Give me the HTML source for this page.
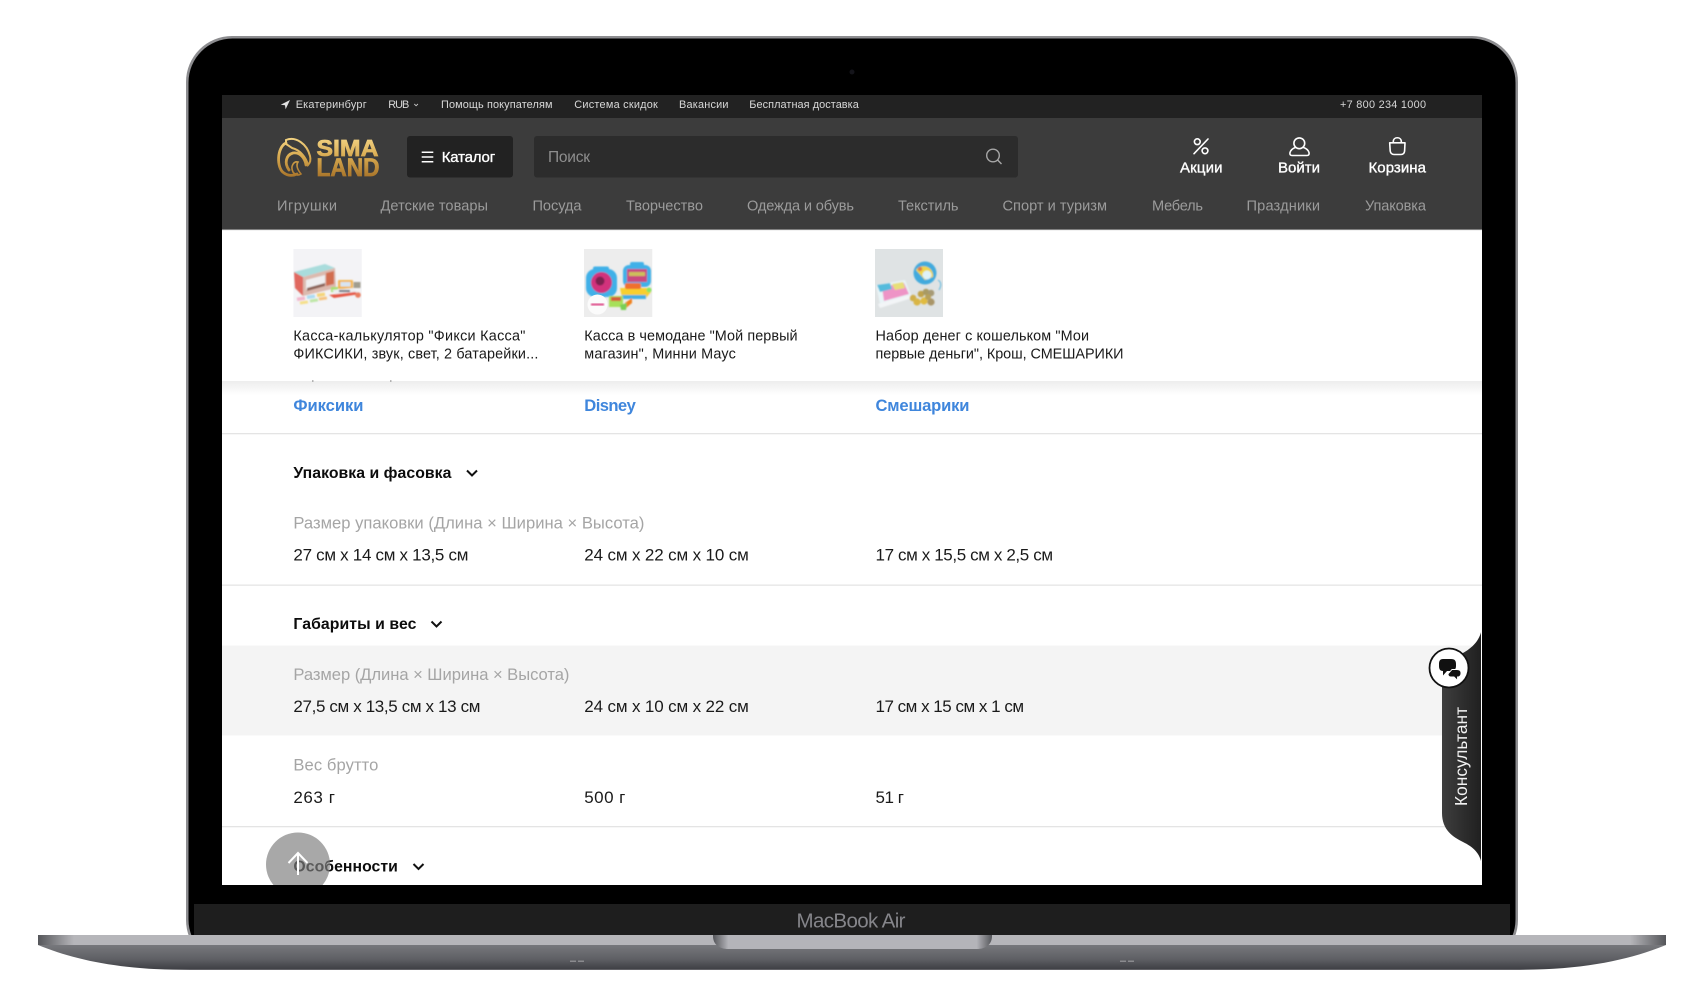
<!DOCTYPE html>
<html lang="ru"><head><meta charset="utf-8"><title>Sima-Land</title>
<style>html,body{margin:0;padding:0;background:#fff;width:1704px;height:982px;overflow:hidden}
svg{display:block}
text{font-family:"Liberation Sans",sans-serif}
.tb{font-size:10.9px;fill:#d8d8d8}
.nav{font-size:14.6px;fill:#9b9b9b}
.ic{font-size:15px;fill:#fff;stroke:#fff;stroke-width:.35}
.pt{font-size:14.4px;fill:#1a1a1a}
.br{font-size:16.6px;font-weight:bold;fill:#3f86dc}
.h{font-size:15.8px;font-weight:bold;fill:#0c0c0c}
.l{font-size:16.6px;fill:#a5a5a5}
.v{font-size:17px;fill:#1a1a1a}
</style></head><body>
<svg width="1704" height="982" viewBox="0 0 1704 982" xmlns="http://www.w3.org/2000/svg">
<defs>
<linearGradient id="gold" gradientUnits="userSpaceOnUse" x1="0" y1="137" x2="0" y2="177"><stop offset="0" stop-color="#f4d585"/><stop offset=".5" stop-color="#d7a94f"/><stop offset="1" stop-color="#a8742a"/></linearGradient>
<linearGradient id="baseG" x1="0" y1="0" x2="0" y2="1"><stop offset="0" stop-color="#77787c"/><stop offset=".55" stop-color="#5f6065"/><stop offset=".95" stop-color="#404146"/><stop offset="1" stop-color="#77777b"/></linearGradient>
<linearGradient id="stripG" x1="0" y1="0" x2="1" y2="0"><stop offset="0" stop-color="#55565a"/><stop offset=".022" stop-color="#b6b6ba"/><stop offset=".978" stop-color="#b6b6ba"/><stop offset="1" stop-color="#55565a"/></linearGradient>
<linearGradient id="notchG" x1="0" y1="0" x2="1" y2="0"><stop offset="0" stop-color="#55565a"/><stop offset=".055" stop-color="#b4b4b9"/><stop offset=".945" stop-color="#b4b4b9"/><stop offset="1" stop-color="#55565a"/></linearGradient>
<linearGradient id="cons" x1="0" y1="0" x2="1" y2="0"><stop offset="0" stop-color="#3e3e3e"/><stop offset="1" stop-color="#1f1f1f"/></linearGradient>
<linearGradient id="shade" x1="0" y1="0" x2="0" y2="1"><stop offset="0" stop-color="#000" stop-opacity=".12"/><stop offset="1" stop-color="#000" stop-opacity="0"/></linearGradient>
<clipPath id="screen"><rect x="222" y="95" width="1260" height="790"/></clipPath>
<filter id="soft" x="-5%" y="-5%" width="110%" height="110%"><feGaussianBlur stdDeviation=".7"/></filter>
<clipPath id="t1"><rect x="293.4" y="249" width="68.3" height="68"/></clipPath>
<clipPath id="t2"><rect x="584" y="249" width="68.3" height="68"/></clipPath>
<clipPath id="t3"><rect x="875" y="249" width="68" height="68"/></clipPath>
</defs>

<!-- laptop lid -->
<rect x="186" y="36" width="1332" height="930" rx="46" fill="#8d8d90"/>
<rect x="188.5" y="38.5" width="1327" height="925" rx="44" fill="#000"/>
<rect x="194" y="904" width="1316" height="31" fill="#1e1e1e"/>
<circle cx="852" cy="72" r="2.5" fill="#14141a"/>
<text x="851" y="927.5" text-anchor="middle" font-size="20.5" fill="#85858a" textLength="109">MacBook Air</text>

<!-- laptop base -->
<rect x="0" y="935" width="186" height="47" fill="#fff"/><rect x="1518" y="935" width="186" height="47" fill="#fff"/>
<path d="M38 945 C75 960 120 970 190 970 H1514 C1584 970 1629 960 1666 945 Z" fill="url(#baseG)"/>
<rect x="38" y="935" width="1628" height="10" fill="url(#stripG)"/>
<path d="M713 935 H992 V936 C992 945 985 949 977 949 H728 C720 949 713 945 713 936 Z" fill="url(#notchG)"/>
<rect x="570" y="960.5" width="6" height="1.5" fill="#8a8a8e"/><rect x="578" y="960.5" width="6" height="1.5" fill="#8a8a8e"/>
<rect x="1120" y="960.5" width="6" height="1.5" fill="#8a8a8e"/><rect x="1128" y="960.5" width="6" height="1.5" fill="#8a8a8e"/>

<!-- screen -->
<g clip-path="url(#screen)">
<rect x="222" y="95" width="1260" height="790" fill="#fff"/>
<rect x="222" y="95" width="1260" height="23" fill="#222"/>
<rect x="222" y="118" width="1260" height="112" fill="#3c3c3c"/>

<!-- top bar -->
<path d="M290 100 L280.7 104.8 L285 105.2 L285.6 109.3 Z" fill="#e2e2e2"/>
<text class="tb" x="295.7" y="108" textLength="71">Екатеринбург</text>
<text class="tb" x="388.3" y="108" textLength="21">RUB</text>
<path d="M414.3 104 l1.8 1.8 l1.8 -1.8" fill="none" stroke="#c8c8c8" stroke-width=".9"/>
<text class="tb" x="441" y="108" textLength="111.5">Помощь покупателям</text>
<text class="tb" x="574.3" y="108" textLength="83.5">Система скидок</text>
<text class="tb" x="679" y="108" textLength="49.5">Вакансии</text>
<text class="tb" x="749.3" y="108" textLength="109.5">Бесплатная доставка</text>
<text class="tb" x="1340" y="108" textLength="86">+7 800 234 1000</text>

<!-- logo -->
<g fill="none" stroke="url(#gold)" stroke-width="2.8" stroke-linecap="round">
<path d="M286 140 C296 136 307 144 310 156 C311 160 310 163 308 165 C306 157 300 150 292 148 L286 144 Z" stroke-width="2"/>
<path d="M286 143 C277 147 276 168 284 173 C288 176 293 176 297 174"/>
<path d="M289 170 C284 163 286 155 293 153 C300 152 305 158 306 165 "/>
<path d="M293 172 C290 166 294 161 298 162 C296 165 297 169 301 174 C298 176 295 175 293 172Z" stroke-width="1.6"/>
</g>
<text x="316.5" y="156" font-size="23.5" font-weight="bold" fill="url(#gold)" stroke="url(#gold)" stroke-width=".7" textLength="62" lengthAdjust="spacingAndGlyphs">SIMA</text>
<text x="316.5" y="176" font-size="25" font-weight="bold" fill="url(#gold)" stroke="url(#gold)" stroke-width=".7" textLength="63" lengthAdjust="spacingAndGlyphs">LAND</text>

<!-- catalog + search -->
<rect x="407" y="136" width="106" height="41.5" rx="3" fill="#222"/>
<path d="M421.7 152.3 H433.3 M421.7 157 H433.3 M421.7 161.7 H433.3" stroke="#fff" stroke-width="1.5"/>
<text class="ic" x="441.7" y="162" textLength="53.5">Каталог</text>
<rect x="534" y="136" width="484" height="41.5" rx="3" fill="#2c2c2c"/>
<text x="548" y="162" font-size="15.5" fill="#8e8e8e" textLength="42">Поиск</text>
<circle cx="993" cy="155.5" r="6.3" fill="none" stroke="#a6a6a6" stroke-width="1.4"/>
<path d="M997.6 160 L1001.5 164" stroke="#a6a6a6" stroke-width="1.4"/>

<!-- header icons -->
<g fill="none" stroke="#fff" stroke-width="1.6" stroke-linecap="round" stroke-linejoin="round">
<path d="M1208 139 L1194 153.7"/><circle cx="1197.3" cy="141.7" r="2.9"/><circle cx="1205" cy="150.8" r="2.9"/>
<circle cx="1299.3" cy="143.3" r="5.4"/>
<path d="M1295.3 147.5 C1292.5 148.5 1290.8 150 1290 152.5 C1289.5 154.5 1290.5 155.5 1292 155.5 H1307 C1308.5 155.5 1309.5 154.5 1309 152.5 C1308.2 150 1306.5 148.5 1303.5 147.5"/>
<path d="M1389.7 142.8 H1405 L1404.6 151 C1404.4 153 1403 154.5 1401 154.5 H1394 C1392 154.5 1390.5 153 1390.2 151 Z"/>
<path d="M1393.3 142.5 V141.5 C1393.3 136.5 1401.3 136.5 1401.3 141.5 V142.5"/>
</g>
<text class="ic" x="1180" y="172.3" textLength="42.5">Акции</text>
<text class="ic" x="1278" y="172.3" textLength="42">Войти</text>
<text class="ic" x="1368.5" y="172.3" textLength="57.5">Корзина</text>

<!-- nav -->
<text class="nav" x="277" y="210.5" textLength="60">Игрушки</text>
<text class="nav" x="380.5" y="210.5" textLength="107.5">Детские товары</text>
<text class="nav" x="532.5" y="210.5" textLength="49">Посуда</text>
<text class="nav" x="626" y="210.5" textLength="77">Творчество</text>
<text class="nav" x="747" y="210.5" textLength="107">Одежда и обувь</text>
<text class="nav" x="898" y="210.5" textLength="60.5">Текстиль</text>
<text class="nav" x="1002.5" y="210.5" textLength="104.5">Спорт и туризм</text>
<text class="nav" x="1152" y="210.5" textLength="51">Мебель</text>
<text class="nav" x="1246.5" y="210.5" textLength="73.5">Праздники</text>
<text class="nav" x="1365" y="210.5" textLength="61">Упаковка</text>

<!-- table body -->
<rect x="222" y="381" width="1260" height="14" fill="url(#shade)" opacity=".6"/>
<text class="br" x="293.4" y="411" textLength="70">Фиксики</text>
<text class="br" x="584.3" y="411" textLength="51.5">Disney</text>
<text class="br" x="875.5" y="411" textLength="94">Смешарики</text>
<rect x="222" y="433" width="1260" height="1.3" fill="#e4e4e4"/>

<text class="h" x="293.4" y="478" textLength="158">Упаковка и фасовка</text>
<path d="M467 470.5 l5 5 l5 -5" fill="none" stroke="#111" stroke-width="2"/>
<text class="l" x="293.4" y="528.7" textLength="351">Размер упаковки (Длина × Ширина × Высота)</text>
<text class="v" x="293.4" y="560.7" textLength="175">27 см x 14 см x 13,5 см</text>
<text class="v" x="584.3" y="560.7" textLength="164.5">24 см x 22 см x 10 см</text>
<text class="v" x="875.5" y="560.7" textLength="177.5">17 см x 15,5 см x 2,5 см</text>
<rect x="222" y="584.5" width="1260" height="1.3" fill="#e4e4e4"/>

<text class="h" x="293.4" y="629" textLength="123">Габариты и вес</text>
<path d="M431.5 621.5 l5 5 l5 -5" fill="none" stroke="#111" stroke-width="2"/>
<rect x="222" y="645.5" width="1260" height="90" fill="#f4f4f4"/>
<text class="l" x="293.4" y="679.8" textLength="276">Размер (Длина × Ширина × Высота)</text>
<text class="v" x="293.4" y="711.8" textLength="187">27,5 см x 13,5 см x 13 см</text>
<text class="v" x="584.3" y="711.8" textLength="164.5">24 см x 10 см x 22 см</text>
<text class="v" x="875.5" y="711.8" textLength="148.5">17 см x 15 см x 1 см</text>
<text class="l" x="293.4" y="770.6" textLength="85">Вес брутто</text>
<text class="v" x="293.4" y="802.8" textLength="41.5">263 г</text>
<text class="v" x="584.3" y="802.8" textLength="41">500 г</text>
<text class="v" x="875.5" y="802.8" textLength="28.5">51 г</text>
<rect x="222" y="826" width="1260" height="1.3" fill="#e4e4e4"/>
<text class="h" x="293.4" y="871.5" textLength="104.5">Особенности</text>
<path d="M413.5 864 l5 5 l5 -5" fill="none" stroke="#111" stroke-width="2"/>

<!-- sticky products -->
<rect x="222" y="230" width="1260" height="151" fill="#fff"/>
<rect x="222" y="229.6" width="1260" height="1" fill="#e8e8e8"/>
<rect x="312" y="380.4" width="1.5" height="1.2" fill="#888"/><rect x="390" y="380.4" width="1.5" height="1.2" fill="#888"/>

<!-- thumb 1 -->
<rect x="293.4" y="249" width="68.3" height="68" fill="#f3f3f6"/>
<g clip-path="url(#t1)"><g filter="url(#soft)">
<path d="M294 272 L325 264 L335 268 L303 277 Z" fill="#a9dcdc"/>
<path d="M294 272 L303 277 L303 296 L295 288 Z" fill="#e0685f"/>
<path d="M303 277 L335 268 L336 288 L303 296 Z" fill="#dcb9ae"/>
<path d="M306 280 L325 275 L325 285 L306 290 Z" fill="#efeef0"/>
<path d="M326 273 L334 271 L334 284 L326 286 Z" fill="#d26d4f"/>
<path d="M307 288 L325 283 L325 286 L307 291 Z" fill="#8b6257"/>
<rect x="338" y="280" width="15" height="9" rx="1" fill="#f2b653"/><rect x="340.5" y="282" width="10" height="4.5" fill="#d8e5f2"/>
<rect x="353.5" y="282" width="7" height="6" fill="#a09d8e"/>
<rect x="331" y="287" width="7" height="5" fill="#a9e070"/>
<path d="M332 290 L352 288 L360 293 L338 296 Z" fill="#eceef1"/>
<rect x="339" y="290" width="11" height="2" fill="#6b6b78"/>
<path d="M329 295 L355 292 L360 294 L334 298 Z" fill="#e55744"/>
<circle cx="358" cy="295" r="2.8" fill="#e97d5e"/>
<rect x="297" y="297" width="8" height="3.5" fill="#f3b7cd" transform="rotate(-8 301 299)"/>
<rect x="307" y="295" width="8" height="3.5" fill="#abdcf2" transform="rotate(-8 311 297)"/>
<rect x="317" y="293" width="8" height="3.5" fill="#f5d478" transform="rotate(-8 321 295)"/>
<rect x="300" y="301" width="8" height="3" fill="#f5df88" transform="rotate(-8 304 303)"/>
<rect x="310" y="299" width="8" height="3" fill="#bde6a6" transform="rotate(-8 314 301)"/>
<rect x="319" y="297" width="8" height="3" fill="#f6c27e" transform="rotate(-8 323 299)"/>
</g></g>

<!-- thumb 2 -->
<rect x="584" y="249" width="68.3" height="68" fill="#ededed"/>
<g clip-path="url(#t2)"><g filter="url(#soft)">
<rect x="586" y="269" width="31" height="28" rx="9" fill="#3fb0e8"/>
<rect x="593" y="266.5" width="16" height="4" rx="2" fill="#3fb0e8"/>
<circle cx="601.5" cy="282.5" r="10.5" fill="#d2327c"/><circle cx="600" cy="281" r="4.5" fill="#7c2050"/>
<rect x="623" y="265" width="28" height="22" rx="6" fill="#3fb0e8"/>
<rect x="630" y="262" width="14" height="4" rx="2" fill="#3fb0e8"/>
<rect x="627" y="269" width="20" height="13" fill="#c9487f"/><rect x="629" y="272" width="16" height="4" fill="#cdbf5a"/>
<path d="M620 288 H647 L651 292 L646 298 H622 Z" fill="#f8cf2e"/>
<rect x="625" y="283" width="16" height="6" rx="2" fill="#ef6f2d"/>
<rect x="622" y="295" width="24" height="4" fill="#40aee4"/>
<circle cx="649" cy="290" r="2.5" fill="#8ae65e"/>
<rect x="609" y="296" width="14" height="11" fill="#a7e05a"/>
<rect x="611" y="297" width="10" height="4" fill="#d45b3c"/>
<path d="M625 303 L632 298 L632 303 L626 308 Z" fill="#f1811f"/>
<path d="M620 305 L627 303 L626 310 L621 310 Z" fill="#78cf55"/>
</g>
<circle cx="597.5" cy="304.5" r="10" fill="#fbfbfb"/>
<rect x="591" y="303.5" width="13" height="2" fill="#dd4a87" filter="url(#soft)"/>
</g>

<!-- thumb 3 -->
<rect x="875" y="249" width="68" height="68" fill="#dfe3e4"/>
<g clip-path="url(#t3)"><g filter="url(#soft)">
<circle cx="925" cy="273" r="11.5" fill="#42aadd"/><path d="M916 270 A9.5 9.5 0 0 1 933 277 L925 280 Z" fill="#f0d648"/>
<circle cx="927" cy="275" r="4.5" fill="#dff2f8"/><circle cx="920" cy="269" r="2.2" fill="#dd7c4d"/>
<path d="M938 280 q5 3 1 10" fill="none" stroke="#5cb8e0" stroke-width="1"/>
<path d="M876 285 L905 280 L911 295 L880 304 Z" fill="#e9f4f7"/>
<path d="M882 287 L904 283 L909 294 L884 301 Z" fill="#ee94c6"/>
<path d="M877 285 L890 283 L892 289 L880 292 Z" fill="#55bbdc"/>
<path d="M892 284 L903 282 L905 288 L895 290 Z" fill="#e7df78"/>
<path d="M878 304 L911 295 L912 298 L880 308 Z" fill="#f3f5f7"/>
<circle cx="921" cy="294" r="3.3" fill="#bfa24c"/><circle cx="926" cy="292" r="3.3" fill="#a89a63"/><circle cx="931" cy="293" r="3.3" fill="#a69a75"/>
<circle cx="913" cy="298" r="3.3" fill="#cfae4a"/><circle cx="917" cy="302" r="3.6" fill="#d9b545"/><circle cx="924" cy="301" r="3.6" fill="#e0bb3f"/><circle cx="931" cy="302" r="3.6" fill="#a99568"/><circle cx="928" cy="297" r="3" fill="#b6a05a"/>
</g></g>

<!-- product titles -->
<text class="pt" x="293.4" y="340.7" textLength="232">Касса-калькулятор "Фикси Касса"</text>
<text class="pt" x="293.4" y="358.7" textLength="245">ФИКСИКИ, звук, свет, 2 батарейки...</text>
<text class="pt" x="584.3" y="340.7" textLength="213.3">Касса в чемодане "Мой первый</text>
<text class="pt" x="584.3" y="358.7" textLength="151.5">магазин", Минни Маус</text>
<text class="pt" x="875.5" y="340.7" textLength="213.5">Набор денег с кошельком "Мои</text>
<text class="pt" x="875.5" y="358.7" textLength="248">первые деньги", Крош, СМЕШАРИКИ</text>

<!-- scroll up -->
<circle cx="298" cy="864.5" r="32" fill="#7f7f7f" fill-opacity=".68"/>
<path d="M298 875 V853.5 M288.5 863 L298 853 L307.5 863" fill="none" stroke="#fff" stroke-width="2"/>

<!-- consultant -->
<path d="M1482 626 C1481 644 1466 652 1455 657 L1442 668 V813 C1442 830 1453 837 1463 842 C1473 847 1480.5 853 1482 866 Z" fill="url(#cons)"/>
<rect x="1481" y="626" width="1" height="240" fill="#fff"/>
<circle cx="1449" cy="668" r="19.5" fill="#fff" stroke="#111" stroke-width="1.8"/>
<path d="M1443 659 H1451 C1455 659 1456 661 1456 664 V666 C1456 669 1454.5 671 1451 671 H1447 L1443 675.5 V671 H1443 C1440 671 1439 669 1439 666 V664 C1439 661 1440 659 1443 659 Z" fill="#111"/>
<path d="M1452 669.5 H1457 C1460 669.5 1461 671 1461 673 C1461 675.5 1459.5 677 1457.5 677 V680.5 L1454 677 H1451 C1449 677 1448 675.5 1448 674 Z" fill="#111" stroke="#fff" stroke-width=".9"/>
<text transform="translate(1467 806) rotate(-90)" font-size="17.3" fill="#f2f2f2" textLength="99">Консультант</text>
</g>
</svg>
</body></html>
